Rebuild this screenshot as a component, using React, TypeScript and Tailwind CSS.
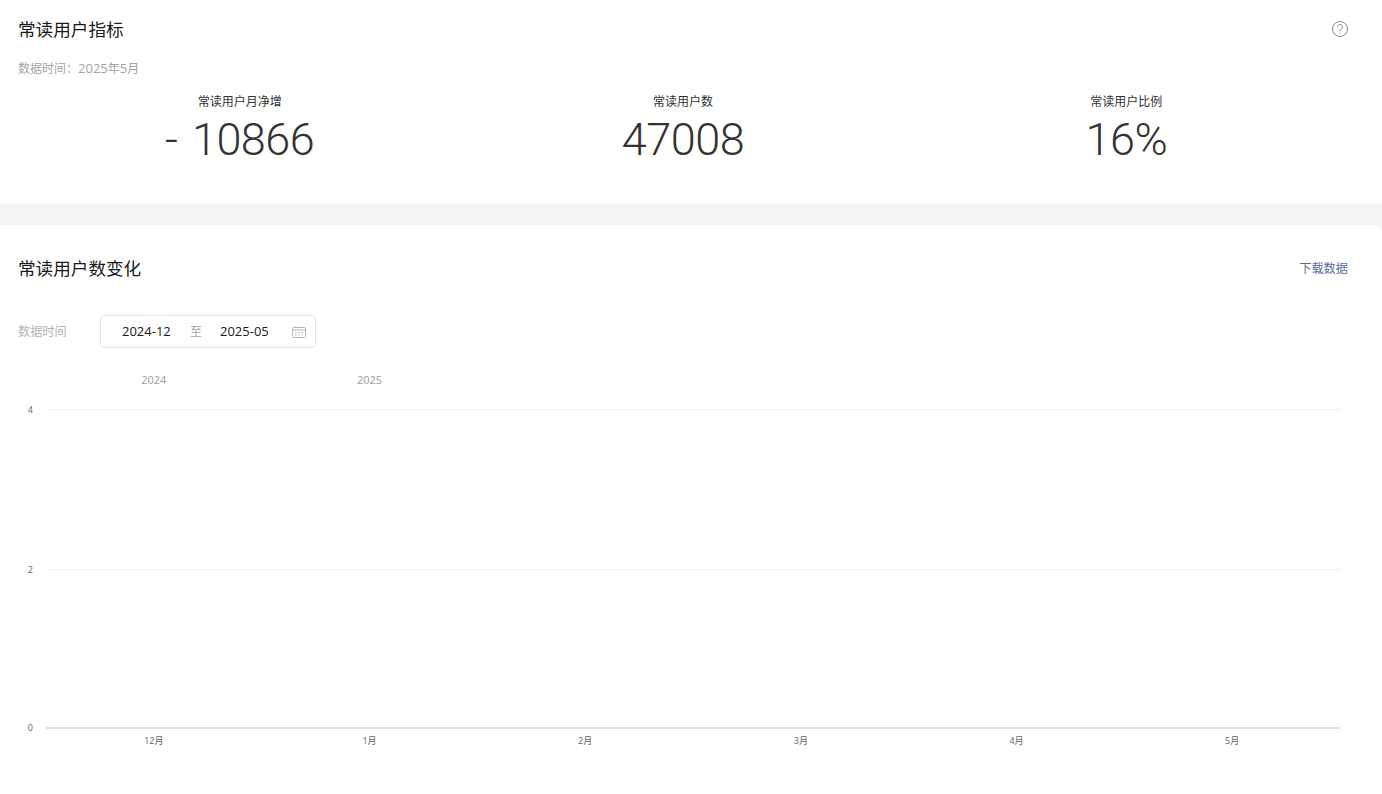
import React from "react"

const sans = "font-['Open_Sans','Noto_Sans_CJK_SC',sans-serif]"

function Metric({ label, value }: { label: string; value: string }) {
  return (
    <div className="flex flex-col items-center">
      <div className="text-[12px] leading-[16px] text-[#333333]">{label}</div>
      <div className="mt-[3px] whitespace-nowrap font-['Roboto',sans-serif] text-[45px] leading-[54px] font-[350] tracking-[-0.5px] [word-spacing:4px] text-[#333333]">{value}</div>
    </div>
  )
}

function YRow({ label, height, line }: { label: string; height: string; line: string }) {
  return (
    <div className={"flex items-start " + height}>
      <div className="w-[46px] pr-[13px] text-right text-[9px] leading-[10px] -mt-[4px] text-[#66635f]">{label}</div>
      <div className={"flex-1 " + line}></div>
    </div>
  )
}

export default function App() {
  const months = ["12月", "1月", "2月", "3月", "4月", "5月"]
  return (
    <div className={"h-[794px] w-[1382px] overflow-hidden bg-[#f4f5f7] " + sans}>
      <section className="h-[204px] bg-white pl-[18px] pr-[34px] pt-[17px]">
        <div className="flex items-start justify-between">
          <h1 className="text-[17.6px] leading-[24px] font-normal text-[#1a1a1a]">常读用户指标</h1>
          <svg width="16" height="16" viewBox="0 0 16 16" fill="none" stroke="#8a8a8a" strokeWidth="1" className="mt-[4px]">
            <circle cx="8" cy="8" r="7.5" />
            <path d="M5.5 6a2.5 2.5 0 1 1 3.8 2.1c-.9.5-1.3 1-1.3 2" />
            <circle cx="8" cy="12.2" r=".6" fill="#8a8a8a" stroke="none" />
          </svg>
        </div>
        <div className="mt-[19px] text-[12px] leading-[16px] text-[#a3a3a3]">
          数据时间：<span className="text-[13px]">2025</span>年<span className="text-[13px]">5</span>月
        </div>
        <div className="mt-[17px] grid grid-cols-3">
          <Metric label="常读用户月净增" value="- 10866" />
          <Metric label="常读用户数" value="47008" />
          <Metric label="常读用户比例" value="16%" />
        </div>
      </section>

      <section className="mt-[21px] h-[569px] rounded-tr-[8px] bg-white pl-[18px] pr-[34px] pt-[31px]">
        <div className="flex items-center justify-between">
          <h2 className="text-[17.6px] leading-[24px] font-normal text-[#1a1a1a]">常读用户数变化</h2>
          <a href="#" className="mt-[2px] text-[12.2px] leading-[16px] text-[#5b6a9a]">下载数据</a>
        </div>

        <div className="mt-[35px] flex items-center">
          <div className="w-[82px] text-[12.2px] leading-[16px] text-[#b3b3b3]">数据时间</div>
          <div className="flex h-[33px] w-[216px] items-center rounded-[4px] border border-[#e5e6e8] pl-[21px] text-[13px] text-[#1a1a1a]">
            <span className="w-[49px]">2024-12</span>
            <span className="ml-[19px] w-[12px] text-[12px] text-[#a6a6a6]">至</span>
            <span className="ml-[18px] w-[49px]">2025-05</span>
            <svg width="14" height="12" viewBox="0 0 14 12" fill="none" stroke="#b5b5b5" strokeWidth="1" className="ml-[23px]">
              <rect x="0.5" y="1.5" width="13" height="10" rx="1" />
              <path d="M0.5 4h13M3.5 0.5v1M10.5 0.5v1M3 6.5h1.5M6.3 6.5h1.5M9.5 6.5h1.5M3 9h1.5M6.3 9h1.5M9.5 9h1.5" />
            </svg>
          </div>
        </div>

        <div className="-ml-[18px] mt-[25px] pr-[8px] pl-[46px]">
          <div className="grid h-[22px] grid-cols-6 text-center text-[11px] leading-[14px] text-[#a09c98]">
            <div>2024</div>
            <div>2025</div>
          </div>
        </div>
        <div className="-ml-[18px] mt-[14px] pr-[8px]">
          <YRow label="4" height="h-[160px]" line="border-t border-[#eeeff1]" />
          <YRow label="2" height="h-[158px]" line="border-t border-[#eeeff1]" />
          <YRow label="0" height="h-[8px]" line="border-t-2 border-[#dfe1e6]" />
          <div className="grid grid-cols-6 pl-[46px] text-center text-[9px] leading-[12px] text-[#66635f]">
            {months.map((m) => (
              <div key={m}>{m}</div>
            ))}
          </div>
        </div>
      </section>
    </div>
  )
}
